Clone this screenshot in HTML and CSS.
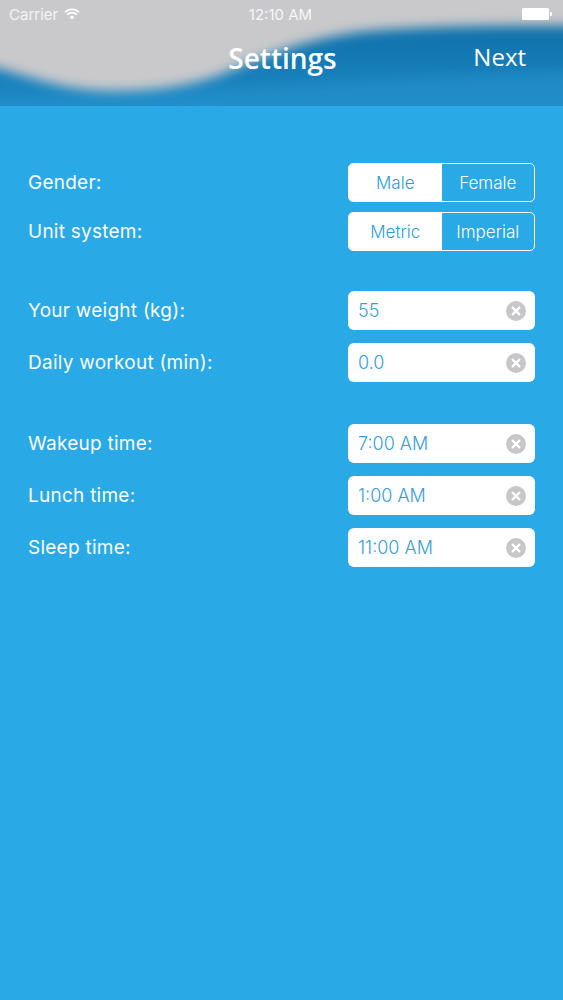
FILE: index.html
```html
<!DOCTYPE html>
<html>
<head>
<meta charset="utf-8">
<link rel="stylesheet" href="styles.css">
</head>
<body>
<div class="screen">
  <header class="header">
    <svg class="wave" viewBox="0 0 563 106" preserveAspectRatio="none" aria-hidden="true">
      <defs>
        <linearGradient id="blue" x1="0" y1="0" x2="0" y2="1">
          <stop offset="0" stop-color="#0c6aa3"/>
          <stop offset="0.55" stop-color="#1479b4"/>
          <stop offset="1" stop-color="#1f8bc7"/>
        </linearGradient>
        <filter id="blur" x="-10%" y="-30%" width="120%" height="160%">
          <feGaussianBlur stdDeviation="6"/>
        </filter>
      </defs>
      <rect x="0" y="0" width="563" height="106" fill="url(#blue)"/>
      <path filter="url(#blur)" fill="#2390cc" opacity="0.6" d="M-20 100 C100 104 300 80 600 70 L600 130 L-20 130 Z"/>
      <path filter="url(#blur)" fill="#c9c9cb" d="M-20 -20 L600 -20 L600 26 C500 25 420 26 360 32 C300 40 262 58 222 74 C182 90 122 94 82 89 C42 84 12 70 -20 64 Z"/>
    </svg>
    <div class="status">
      <div class="carrier">Carrier
        <svg class="wifi" viewBox="0 0 16 12" aria-hidden="true">
          <path d="M8 11.5 L5.6 8.9 A3.4 3.4 0 0 1 10.4 8.9 Z" fill="#fff"/>
          <path d="M3.3 6.6 A6.6 6.6 0 0 1 12.7 6.6" stroke="#fff" stroke-width="1.7" fill="none"/>
          <path d="M1 4.2 A9.8 9.8 0 0 1 15 4.2" stroke="#fff" stroke-width="1.7" fill="none"/>
        </svg>
      </div>
      <div class="time">12:10 AM</div>
      <div class="battery"><span class="cell"></span><span class="nub"></span></div>
    </div>
    <div class="nav">
      <h1 class="title">Settings</h1>
      <span class="next">Next</span>
    </div>
  </header>

  <main class="form">
    <section class="group">
      <div class="row">
        <span class="label">Gender:</span>
        <div class="segmented">
          <span class="seg selected">Male</span>
          <span class="seg">Female</span>
        </div>
      </div>
      <div class="row">
        <span class="label">Unit system:</span>
        <div class="segmented">
          <span class="seg selected">Metric</span>
          <span class="seg">Imperial</span>
        </div>
      </div>
    </section>

    <section class="group">
      <div class="row">
        <span class="label">Your weight (kg):</span>
        <div class="field"><span class="value">55</span><svg class="clear" viewBox="0 0 20 20" aria-hidden="true"><circle cx="10" cy="10" r="10" fill="#c7c7c9"/><path d="M6.6 6.6 L13.4 13.4 M13.4 6.6 L6.6 13.4" stroke="#fff" stroke-width="2.2" stroke-linecap="round"/></svg></div>
      </div>
      <div class="row">
        <span class="label">Daily workout (min):</span>
        <div class="field"><span class="value">0.0</span><svg class="clear" viewBox="0 0 20 20" aria-hidden="true"><circle cx="10" cy="10" r="10" fill="#c7c7c9"/><path d="M6.6 6.6 L13.4 13.4 M13.4 6.6 L6.6 13.4" stroke="#fff" stroke-width="2.2" stroke-linecap="round"/></svg></div>
      </div>
    </section>

    <section class="group">
      <div class="row">
        <span class="label">Wakeup time:</span>
        <div class="field"><span class="value">7:00 AM</span><svg class="clear" viewBox="0 0 20 20" aria-hidden="true"><circle cx="10" cy="10" r="10" fill="#c7c7c9"/><path d="M6.6 6.6 L13.4 13.4 M13.4 6.6 L6.6 13.4" stroke="#fff" stroke-width="2.2" stroke-linecap="round"/></svg></div>
      </div>
      <div class="row">
        <span class="label">Lunch time:</span>
        <div class="field"><span class="value">1:00 AM</span><svg class="clear" viewBox="0 0 20 20" aria-hidden="true"><circle cx="10" cy="10" r="10" fill="#c7c7c9"/><path d="M6.6 6.6 L13.4 13.4 M13.4 6.6 L6.6 13.4" stroke="#fff" stroke-width="2.2" stroke-linecap="round"/></svg></div>
      </div>
      <div class="row">
        <span class="label">Sleep time:</span>
        <div class="field"><span class="value">11:00 AM</span><svg class="clear" viewBox="0 0 20 20" aria-hidden="true"><circle cx="10" cy="10" r="10" fill="#c7c7c9"/><path d="M6.6 6.6 L13.4 13.4 M13.4 6.6 L6.6 13.4" stroke="#fff" stroke-width="2.2" stroke-linecap="round"/></svg></div>
      </div>
    </section>
  </main>
</div>
</body>
</html>
```

FILE: styles.css
```css
* { box-sizing: border-box; margin: 0; padding: 0; }
html, body { width: 563px; height: 1000px; overflow: hidden; }
body {
  background: #29a9e6;
  font-family: Inter, "Liberation Sans", Arial, sans-serif;
  color: #fff;
}
.screen { width: 563px; height: 1000px; background: #29a9e6; }

.header {
  position: relative;
  height: 106px;
  overflow: hidden;
}
.wave { position: absolute; left: 0; top: 0; width: 563px; height: 106px; }

.status {
  position: relative;
  height: 30px;
  display: flex;
  align-items: center;
  justify-content: space-between;
  padding: 0 11px 2px 9px;
  font-size: 15px;
  color: #f4f4f4;
}
.carrier { display: flex; align-items: center; gap: 6px; width: 120px; }
.wifi { width: 16px; height: 12px; }
.time { font-size: 15px; color: #f6f6f6; }
.battery { width: 120px; display: flex; justify-content: flex-end; align-items: center; }
.cell { width: 27px; height: 12px; background: #fff; border-radius: 1.5px; }
.nub { width: 2px; height: 4px; background: #fff; margin-left: 1px; border-radius: 0 1px 1px 0; }

.nav {
  position: relative;
  height: 56px;
  display: flex;
  align-items: center;
  justify-content: center;
}
.title {
  font-family: "Open Sans", "Noto Sans", sans-serif;
  font-weight: 600;
  font-size: 28px;
  color: #fff;
  margin-left: 2px;
}
.next {
  position: absolute;
  right: 37px;
  top: 10px;
  font-family: "Open Sans", "Noto Sans", sans-serif;
  font-size: 24px;
  color: #fff;
}

.form {
  padding: 57px 28px 0 28px;
  display: flex;
  flex-direction: column;
  gap: 40px;
}
.group { display: flex; flex-direction: column; gap: 10px; }
.group:nth-child(2) { gap: 13px; }
.group:nth-child(3) { gap: 13px; margin-top: 2px; }
.row {
  display: flex;
  align-items: center;
  justify-content: space-between;
  height: 39px;
}
.label { font-size: 19px; letter-spacing: 0.25px; color: #fafcfe; font-weight: 400; }

.segmented {
  width: 187px;
  height: 39px;
  display: flex;
  border: 1.5px solid #fff;
  border-radius: 5px;
  overflow: hidden;
}
.seg {
  flex: 1;
  display: flex;
  align-items: center;
  justify-content: center;
  font-size: 17px;
  color: #fff;
  font-weight: 300;
}
.seg.selected { background: #fff; color: #2d9dd8; }

.field {
  width: 187px;
  height: 39px;
  background: #fff;
  border-radius: 6px;
  display: flex;
  align-items: center;
  justify-content: space-between;
  padding: 0 9px 0 10px;
}
.value { font-size: 18px; color: #3a9ed6; font-weight: 300; }
.clear { width: 20px; height: 20px; flex: none; }
```
